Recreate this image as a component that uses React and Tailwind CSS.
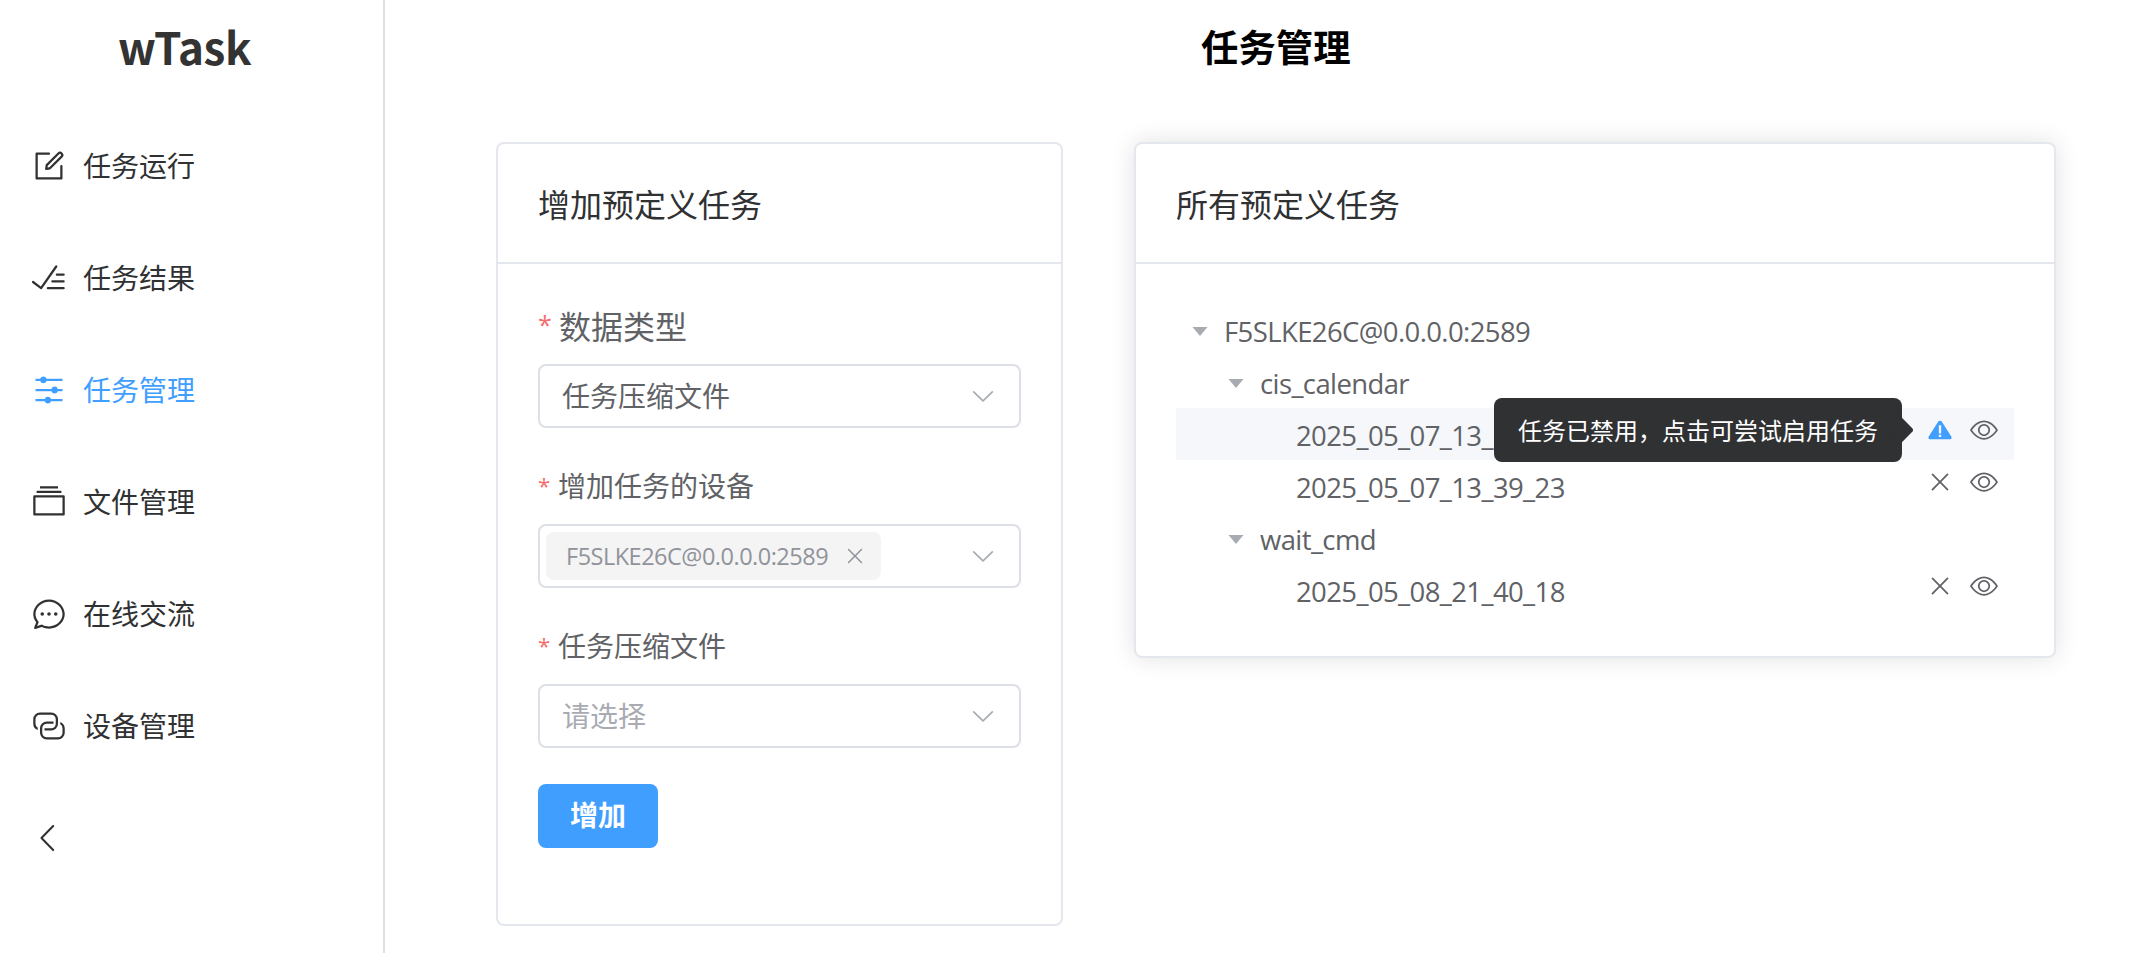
const ICONS = {
  edit: [
    'M832 512a32 32 0 1 1 64 0v352a32 32 0 0 1-32 32H160a32 32 0 0 1-32-32V160a32 32 0 0 1 32-32h352a32 32 0 0 1 0 64H192v640h640z',
    'm469.952 554.24 52.8-7.552L847.104 222.4a32 32 0 1 0-45.248-45.248L477.44 501.44l-7.552 52.8zm422.4-422.4a96 96 0 0 1 0 135.808l-331.84 331.84a32 32 0 0 1-18.112 9.088L436.8 623.68a32 32 0 0 1-36.224-36.224l15.104-105.6a32 32 0 0 1 9.024-18.112l331.904-331.84a96 96 0 0 1 135.744 0z',
  ],
  finished: [
    'M280.768 753.728 691.456 167.04a32 32 0 1 1 52.416 36.672L314.24 817.472a32 32 0 0 1-45.44 7.296l-230.4-172.8a32 32 0 0 1 38.4-51.2l203.968 152.96zM736 448a32 32 0 1 1 0-64h192a32 32 0 1 1 0 64zM608 640a32 32 0 0 1 0-64h319.936a32 32 0 1 1 0 64zM480 832a32 32 0 1 1 0-64h447.936a32 32 0 1 1 0 64z',
  ],
  operation: [
    'M389.44 768a96.064 96.064 0 0 1 181.12 0H896v64H570.56a96.064 96.064 0 0 1-181.12 0H128v-64zm192-288a96.064 96.064 0 0 1 181.12 0H896v64H762.56a96.064 96.064 0 0 1-181.12 0H128v-64zm-320-288a96.064 96.064 0 0 1 181.12 0H896v64H442.56a96.064 96.064 0 0 1-181.12 0H128v-64z',
  ],
  files: [
    'M128 384v448h768V384zm-32-64h832a32 32 0 0 1 32 32v512a32 32 0 0 1-32 32H96a32 32 0 0 1-32-32V352a32 32 0 0 1 32-32m64-128h704v64H160zm96-128h512v64H256z',
  ],
  chat: [
    'm174.72 855.68 135.296-45.12 23.68 11.84C388.096 849.536 448.576 864 512 864c211.84 0 384-166.784 384-352S723.84 160 512 160 128 326.784 128 512c0 69.12 24.96 139.264 70.848 199.232l22.08 28.8-46.272 115.584zm-45.248 82.56A32 32 0 0 1 89.6 896l58.368-145.92C94.72 680.32 64 596.864 64 512 64 299.904 256 96 512 96s448 203.904 448 416-192 416-448 416a461.056 461.056 0 0 1-206.912-48.384l-175.616 58.56z',
    'M512 563.2a51.2 51.2 0 1 1 0-102.4 51.2 51.2 0 0 1 0 102.4m192 0a51.2 51.2 0 1 1 0-102.4 51.2 51.2 0 0 1 0 102.4m-384 0a51.2 51.2 0 1 1 0-102.4 51.2 51.2 0 0 1 0 102.4',
  ],
  connection: [
    'M640 384v64H448a128 128 0 0 0-128 128v128a128 128 0 0 0 128 128h320a128 128 0 0 0 128-128V576a128 128 0 0 0-64-110.848V394.88c74.56 26.368 128 97.472 128 181.056v128a192 192 0 0 1-192 192H448a192 192 0 0 1-192-192V576a192 192 0 0 1 192-192z',
    'M384 640v-64h192a128 128 0 0 0 128-128V320a128 128 0 0 0-128-128H256a128 128 0 0 0-128 128v128a128 128 0 0 0 64 110.848v70.272A192.064 192.064 0 0 1 64 448V320a192 192 0 0 1 192-192h320a192 192 0 0 1 192 192v128a192 192 0 0 1-192 192z',
  ],
  arrowLeft: [
    'M609.408 149.376 277.76 489.6a32 32 0 0 0 0 44.672l331.648 340.352a29.12 29.12 0 0 0 41.728 0 30.592 30.592 0 0 0 0-42.752L339.264 511.936l311.872-319.872a30.592 30.592 0 0 0 0-42.688 29.12 29.12 0 0 0-41.728 0z',
  ],
  arrowDown: [
    'M831.872 340.864 512 652.672 192.128 340.864a30.592 30.592 0 0 0-42.752 0 29.12 29.12 0 0 0 0 41.6L489.664 714.24a32 32 0 0 0 44.672 0l340.288-331.712a29.12 29.12 0 0 0 0-41.728 30.592 30.592 0 0 0-42.752 0z',
  ],
  close: [
    'M764.288 214.592 512 466.88 259.712 214.592a31.936 31.936 0 0 0-45.12 45.12L466.752 512 214.528 764.224a31.936 31.936 0 1 0 45.12 45.184L512 557.184l252.288 252.288a31.936 31.936 0 0 0 45.12-45.12L557.12 512.064l252.288-252.352a31.936 31.936 0 1 0-45.12-45.184z',
  ],
  view: [
    'M512 160c320 0 512 352 512 352S832 864 512 864 0 512 0 512s192-352 512-352m0 64c-225.28 0-384.128 208.064-436.8 288 52.608 79.872 211.456 288 436.8 288 225.28 0 384.128-208.064 436.8-288-52.608-79.872-211.456-288-436.8-288m0 64a224 224 0 1 1 0 448 224 224 0 0 1 0-448m0 64a160.192 160.192 0 0 0-160 160c0 88.192 71.744 160 160 160s160-71.808 160-160-71.744-160-160-160',
  ],
  warn: [
    'M928.99 755.83 574.6 203.25c-12.89-20.16-36.76-32.58-62.6-32.58s-49.71 12.43-62.6 32.58L95.01 755.83c-12.91 20.12-12.9 44.91.01 65.03 12.92 20.12 36.78 32.51 62.59 32.49h708.78c25.82.01 49.68-12.37 62.59-32.49 12.91-20.12 12.92-44.91.01-65.03M554.67 768h-85.33v-85.33h85.33zm0-426.67v298.66h-85.33V341.32z',
  ],
  caretDown: ['m192 384 320 384 320-384z'],
};

function Icon({ name, className }) {
  return (
    <svg viewBox="0 0 1024 1024" fill="currentColor" className={`shrink-0 ${className}`}>
      {ICONS[name].map((d) => (
        <path key={d} d={d} />
      ))}
    </svg>
  );
}

const MENU = [
  { icon: 'edit', label: '任务运行' },
  { icon: 'finished', label: '任务结果' },
  { icon: 'operation', label: '任务管理', active: true },
  { icon: 'files', label: '文件管理' },
  { icon: 'chat', label: '在线交流' },
  { icon: 'connection', label: '设备管理' },
];

function Sidebar() {
  return (
    <aside className="flex w-[385px] shrink-0 flex-col border-r-2 border-[#dcdfe6] text-[#303133]">
      <h2 className="flex h-[110px] items-center justify-center pr-[14px] pb-[19px] text-[44px] leading-none font-bold tracking-[-0.4px] text-[#333333]">
        wTask
      </h2>
      <nav className="flex flex-col">
        {MENU.map((item) => (
          <a
            key={item.label}
            className={`flex h-28 items-center gap-4 pl-[31px] text-[28px] ${item.active ? 'text-[#409eff]' : ''}`}
          >
            <Icon name={item.icon} className="size-9" />
            <span className="pb-0.5">{item.label}</span>
          </a>
        ))}
        <a className="flex h-28 items-center pl-[31px]">
          <Icon name="arrowLeft" className="size-9" />
        </a>
      </nav>
    </aside>
  );
}

function Card({ title, className, children }) {
  return (
    <section className={`rounded-lg border-2 border-[#e4e7ed] bg-white ${className}`}>
      <header className="flex h-[120px] items-center border-b-2 border-[#e4e7ed] px-10 text-[32px] text-[#303133]">
        {title}
      </header>
      {children}
    </section>
  );
}

function Field({ label, large, children }) {
  return (
    <div className="mb-9">
      <div
        className={`flex h-11 items-center gap-2 pb-0.5 text-[#606266] ${large ? 'text-[32px]' : 'text-[28px]'}`}
      >
        <span
          className={`font-['Open_Sans'] text-[#f56c6c] ${large ? 'w-[13px] text-[25px]' : 'w-[12px] text-[22px]'}`}
        >
          *
        </span>
        <span>{label}</span>
      </div>
      <div className="mt-4 flex h-16 items-center justify-between rounded-lg border-2 border-[#dcdfe6] pr-[22px] text-[28px]">
        {children}
        <Icon name="arrowDown" className="size-7 text-[#a8abb2]" />
      </div>
    </div>
  );
}

function TaskForm() {
  return (
    <Card title="增加预定义任务" className="h-[784px] w-[567px]">
      <div className="px-10 pt-10">
        <Field label="数据类型" large>
          <span className="pb-0.5 pl-[22px] text-[#606266]">任务压缩文件</span>
        </Field>
        <Field label="增加任务的设备">
          <span className="ml-1.5 flex h-12 w-[335px] items-center justify-between rounded-lg bg-[#f4f4f5] pr-3.5 pl-5 text-[#909399]">
            <span className="pt-0.5 font-['Open_Sans'] text-[23.5px] tracking-[-0.5px]">F5SLKE26C@0.0.0.0:2589</span>
            <Icon name="close" className="size-6" />
          </span>
        </Field>
        <Field label="任务压缩文件">
          <span className="pb-0.5 pl-[22px] text-[#a8abb2]">请选择</span>
        </Field>
        <button className="flex h-16 w-[120px] items-center justify-center rounded-lg bg-[#409eff] pb-1 text-[28px] font-bold text-white">
          增加
        </button>
      </div>
    </Card>
  );
}

const TREE = [
  { level: 0, label: 'F5SLKE26C@0.0.0.0:2589' },
  { level: 1, label: 'cis_calendar' },
  { level: 2, label: '2025_05_07_13_39_20', disabled: true },
  { level: 2, label: '2025_05_07_13_39_23' },
  { level: 1, label: 'wait_cmd' },
  { level: 2, label: '2025_05_08_21_40_18' },
];

const INDENT = ['pl-0', 'pl-9', 'pl-[72px]'];

function Tooltip({ children }) {
  return (
    <div className="absolute top-[-10px] right-[112px] flex h-16 w-[408px] items-center justify-center rounded-lg bg-[#303133] text-[24px] whitespace-nowrap text-white">
      <span className="absolute top-[22px] right-[-8px] size-5 rotate-45 rounded-tr-[3px] bg-[#303133]" />
      <span className="relative pb-px">{children}</span>
    </div>
  );
}

function TreeRow({ node }) {
  const leaf = node.level === 2;
  return (
    <div className={`relative flex h-[52px] items-center ${INDENT[node.level]} ${node.disabled ? 'bg-[#f5f7fa]' : ''}`}>
      <span className="flex w-12 justify-center">
        {!leaf && <Icon name="caretDown" className="size-6 text-[#a8abb2]" />}
      </span>
      <span className="pt-[3px] font-['Open_Sans'] text-[27.5px] tracking-[-0.61px] text-[#606266]">{node.label}</span>
      {leaf && (
        <span className="mr-4 mb-2 ml-auto flex gap-4 text-[#606266]">
          {node.disabled ? (
            <Icon name="warn" className="size-7 text-[#409eff]" />
          ) : (
            <Icon name="close" className="size-7" />
          )}
          <Icon name="view" className="size-7" />
        </span>
      )}
      {node.disabled && <Tooltip>任务已禁用，点击可尝试启用任务</Tooltip>}
    </div>
  );
}

function TaskTree() {
  return (
    <Card title="所有预定义任务" className="w-[922px] shadow-[0_0_24px_rgba(0,0,0,0.12)]">
      <div className="p-10">
        {TREE.map((node) => (
          <TreeRow key={node.label} node={node} />
        ))}
      </div>
    </Card>
  );
}

export default function App() {
  return (
    <div className="flex h-[953px] w-full overflow-hidden bg-white font-['Noto_Sans_CJK_SC',sans-serif]">
      <Sidebar />
      <main className="flex-1 pl-[111px]">
        <h3 className="flex h-[142px] items-center pb-[49px] pl-[705px] text-[37.44px] font-bold text-black">任务管理</h3>
        <div className="flex items-start gap-[71px]">
          <TaskForm />
          <TaskTree />
        </div>
      </main>
    </div>
  );
}
